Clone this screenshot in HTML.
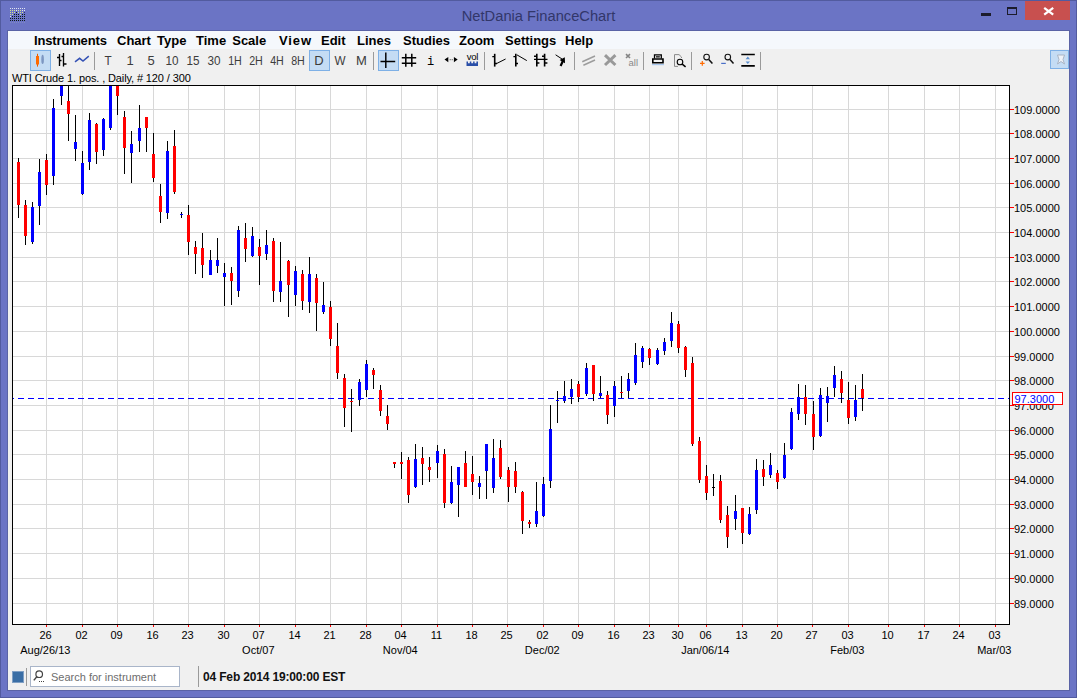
<!DOCTYPE html>
<html><head><meta charset="utf-8"><title>NetDania FinanceChart</title>
<style>
html,body{margin:0;padding:0}
body{width:1077px;height:698px;overflow:hidden;background:#6b74c5;position:relative;box-shadow:inset 0 0 0 1px #525b9f;font-family:"Liberation Sans",Arial,sans-serif}
.abs{position:absolute}
#title{left:0;top:0;width:1077px;height:31px;text-align:center;font-size:14.7px;line-height:32px;color:#32376a}
#content{left:8px;top:31px;width:1061px;height:659px;background:#f0f0f0;outline:1px solid #5a63a6}
#menubar{left:8px;top:31px;width:1061px;height:18px;background:#f5f8fc}
.menu{position:absolute;top:33px;font-weight:bold;font-size:13px;line-height:15px;color:#000;white-space:nowrap}
.tb{position:absolute;top:53px;font-size:13px;line-height:15px;color:#3c3c3c;white-space:nowrap;transform:translateX(-50%)}
.sel{position:absolute;box-sizing:border-box;background:#c4dcf4;border:1px solid #7eb0e6}
.sep{position:absolute;width:1px;background:#9a9a9a}
</style></head><body>
<div id="title" class="abs">NetDania FinanceChart</div>
<div id="content" class="abs"></div>
<div id="menubar" class="abs"></div>
<svg width="1077" height="698" viewBox="0 0 1077 698" style="position:absolute;left:0;top:0" shape-rendering="crispEdges">
<rect x="12" y="85" width="998" height="540" fill="#fff"/>
<rect x="46" y="86" width="1" height="538" fill="#d8d8d8"/>
<rect x="82" y="86" width="1" height="538" fill="#d8d8d8"/>
<rect x="117" y="86" width="1" height="538" fill="#d8d8d8"/>
<rect x="153" y="86" width="1" height="538" fill="#d8d8d8"/>
<rect x="188" y="86" width="1" height="538" fill="#d8d8d8"/>
<rect x="224" y="86" width="1" height="538" fill="#d8d8d8"/>
<rect x="259" y="86" width="1" height="538" fill="#d8d8d8"/>
<rect x="295" y="86" width="1" height="538" fill="#d8d8d8"/>
<rect x="330" y="86" width="1" height="538" fill="#d8d8d8"/>
<rect x="366" y="86" width="1" height="538" fill="#d8d8d8"/>
<rect x="401" y="86" width="1" height="538" fill="#d8d8d8"/>
<rect x="437" y="86" width="1" height="538" fill="#d8d8d8"/>
<rect x="472" y="86" width="1" height="538" fill="#d8d8d8"/>
<rect x="507" y="86" width="1" height="538" fill="#d8d8d8"/>
<rect x="543" y="86" width="1" height="538" fill="#d8d8d8"/>
<rect x="578" y="86" width="1" height="538" fill="#d8d8d8"/>
<rect x="614" y="86" width="1" height="538" fill="#d8d8d8"/>
<rect x="649" y="86" width="1" height="538" fill="#d8d8d8"/>
<rect x="678" y="86" width="1" height="538" fill="#d8d8d8"/>
<rect x="706" y="86" width="1" height="538" fill="#d8d8d8"/>
<rect x="742" y="86" width="1" height="538" fill="#d8d8d8"/>
<rect x="777" y="86" width="1" height="538" fill="#d8d8d8"/>
<rect x="812" y="86" width="1" height="538" fill="#d8d8d8"/>
<rect x="848" y="86" width="1" height="538" fill="#d8d8d8"/>
<rect x="888" y="86" width="1" height="538" fill="#d8d8d8"/>
<rect x="924" y="86" width="1" height="538" fill="#d8d8d8"/>
<rect x="959" y="86" width="1" height="538" fill="#d8d8d8"/>
<rect x="995" y="86" width="1" height="538" fill="#d8d8d8"/>
<rect x="13" y="109" width="996" height="1" fill="#d8d8d8"/>
<rect x="13" y="133" width="996" height="1" fill="#d8d8d8"/>
<rect x="13" y="158" width="996" height="1" fill="#d8d8d8"/>
<rect x="13" y="183" width="996" height="1" fill="#d8d8d8"/>
<rect x="13" y="207" width="996" height="1" fill="#d8d8d8"/>
<rect x="13" y="232" width="996" height="1" fill="#d8d8d8"/>
<rect x="13" y="257" width="996" height="1" fill="#d8d8d8"/>
<rect x="13" y="281" width="996" height="1" fill="#d8d8d8"/>
<rect x="13" y="306" width="996" height="1" fill="#d8d8d8"/>
<rect x="13" y="331" width="996" height="1" fill="#d8d8d8"/>
<rect x="13" y="356" width="996" height="1" fill="#d8d8d8"/>
<rect x="13" y="380" width="996" height="1" fill="#d8d8d8"/>
<rect x="13" y="405" width="996" height="1" fill="#d8d8d8"/>
<rect x="13" y="430" width="996" height="1" fill="#d8d8d8"/>
<rect x="13" y="454" width="996" height="1" fill="#d8d8d8"/>
<rect x="13" y="479" width="996" height="1" fill="#d8d8d8"/>
<rect x="13" y="504" width="996" height="1" fill="#d8d8d8"/>
<rect x="13" y="528" width="996" height="1" fill="#d8d8d8"/>
<rect x="13" y="553" width="996" height="1" fill="#d8d8d8"/>
<rect x="13" y="578" width="996" height="1" fill="#d8d8d8"/>
<rect x="13" y="603" width="996" height="1" fill="#d8d8d8"/>
<clipPath id="cp"><rect x="13" y="86" width="996" height="538"/></clipPath>
<g clip-path="url(#cp)">
<rect x="8" y="394" width="6" height="1" fill="#ffffd8"/><rect x="8" y="398" width="6" height="1" fill="#0000ff"/><rect x="18" y="394" width="6" height="1" fill="#ffffd8"/><rect x="18" y="398" width="6" height="1" fill="#0000ff"/><rect x="28" y="394" width="6" height="1" fill="#ffffd8"/><rect x="28" y="398" width="6" height="1" fill="#0000ff"/><rect x="38" y="394" width="6" height="1" fill="#ffffd8"/><rect x="38" y="398" width="6" height="1" fill="#0000ff"/><rect x="48" y="394" width="6" height="1" fill="#ffffd8"/><rect x="48" y="398" width="6" height="1" fill="#0000ff"/><rect x="58" y="394" width="6" height="1" fill="#ffffd8"/><rect x="58" y="398" width="6" height="1" fill="#0000ff"/><rect x="68" y="394" width="6" height="1" fill="#ffffd8"/><rect x="68" y="398" width="6" height="1" fill="#0000ff"/><rect x="78" y="394" width="6" height="1" fill="#ffffd8"/><rect x="78" y="398" width="6" height="1" fill="#0000ff"/><rect x="88" y="394" width="6" height="1" fill="#ffffd8"/><rect x="88" y="398" width="6" height="1" fill="#0000ff"/><rect x="98" y="394" width="6" height="1" fill="#ffffd8"/><rect x="98" y="398" width="6" height="1" fill="#0000ff"/><rect x="108" y="394" width="6" height="1" fill="#ffffd8"/><rect x="108" y="398" width="6" height="1" fill="#0000ff"/><rect x="118" y="394" width="6" height="1" fill="#ffffd8"/><rect x="118" y="398" width="6" height="1" fill="#0000ff"/><rect x="128" y="394" width="6" height="1" fill="#ffffd8"/><rect x="128" y="398" width="6" height="1" fill="#0000ff"/><rect x="138" y="394" width="6" height="1" fill="#ffffd8"/><rect x="138" y="398" width="6" height="1" fill="#0000ff"/><rect x="148" y="394" width="6" height="1" fill="#ffffd8"/><rect x="148" y="398" width="6" height="1" fill="#0000ff"/><rect x="158" y="394" width="6" height="1" fill="#ffffd8"/><rect x="158" y="398" width="6" height="1" fill="#0000ff"/><rect x="168" y="394" width="6" height="1" fill="#ffffd8"/><rect x="168" y="398" width="6" height="1" fill="#0000ff"/><rect x="178" y="394" width="6" height="1" fill="#ffffd8"/><rect x="178" y="398" width="6" height="1" fill="#0000ff"/><rect x="188" y="394" width="6" height="1" fill="#ffffd8"/><rect x="188" y="398" width="6" height="1" fill="#0000ff"/><rect x="198" y="394" width="6" height="1" fill="#ffffd8"/><rect x="198" y="398" width="6" height="1" fill="#0000ff"/><rect x="208" y="394" width="6" height="1" fill="#ffffd8"/><rect x="208" y="398" width="6" height="1" fill="#0000ff"/><rect x="218" y="394" width="6" height="1" fill="#ffffd8"/><rect x="218" y="398" width="6" height="1" fill="#0000ff"/><rect x="228" y="394" width="6" height="1" fill="#ffffd8"/><rect x="228" y="398" width="6" height="1" fill="#0000ff"/><rect x="238" y="394" width="6" height="1" fill="#ffffd8"/><rect x="238" y="398" width="6" height="1" fill="#0000ff"/><rect x="248" y="394" width="6" height="1" fill="#ffffd8"/><rect x="248" y="398" width="6" height="1" fill="#0000ff"/><rect x="258" y="394" width="6" height="1" fill="#ffffd8"/><rect x="258" y="398" width="6" height="1" fill="#0000ff"/><rect x="268" y="394" width="6" height="1" fill="#ffffd8"/><rect x="268" y="398" width="6" height="1" fill="#0000ff"/><rect x="278" y="394" width="6" height="1" fill="#ffffd8"/><rect x="278" y="398" width="6" height="1" fill="#0000ff"/><rect x="288" y="394" width="6" height="1" fill="#ffffd8"/><rect x="288" y="398" width="6" height="1" fill="#0000ff"/><rect x="298" y="394" width="6" height="1" fill="#ffffd8"/><rect x="298" y="398" width="6" height="1" fill="#0000ff"/><rect x="308" y="394" width="6" height="1" fill="#ffffd8"/><rect x="308" y="398" width="6" height="1" fill="#0000ff"/><rect x="318" y="394" width="6" height="1" fill="#ffffd8"/><rect x="318" y="398" width="6" height="1" fill="#0000ff"/><rect x="328" y="394" width="6" height="1" fill="#ffffd8"/><rect x="328" y="398" width="6" height="1" fill="#0000ff"/><rect x="338" y="394" width="6" height="1" fill="#ffffd8"/><rect x="338" y="398" width="6" height="1" fill="#0000ff"/><rect x="348" y="394" width="6" height="1" fill="#ffffd8"/><rect x="348" y="398" width="6" height="1" fill="#0000ff"/><rect x="358" y="394" width="6" height="1" fill="#ffffd8"/><rect x="358" y="398" width="6" height="1" fill="#0000ff"/><rect x="368" y="394" width="6" height="1" fill="#ffffd8"/><rect x="368" y="398" width="6" height="1" fill="#0000ff"/><rect x="378" y="394" width="6" height="1" fill="#ffffd8"/><rect x="378" y="398" width="6" height="1" fill="#0000ff"/><rect x="388" y="394" width="6" height="1" fill="#ffffd8"/><rect x="388" y="398" width="6" height="1" fill="#0000ff"/><rect x="398" y="394" width="6" height="1" fill="#ffffd8"/><rect x="398" y="398" width="6" height="1" fill="#0000ff"/><rect x="408" y="394" width="6" height="1" fill="#ffffd8"/><rect x="408" y="398" width="6" height="1" fill="#0000ff"/><rect x="418" y="394" width="6" height="1" fill="#ffffd8"/><rect x="418" y="398" width="6" height="1" fill="#0000ff"/><rect x="428" y="394" width="6" height="1" fill="#ffffd8"/><rect x="428" y="398" width="6" height="1" fill="#0000ff"/><rect x="438" y="394" width="6" height="1" fill="#ffffd8"/><rect x="438" y="398" width="6" height="1" fill="#0000ff"/><rect x="448" y="394" width="6" height="1" fill="#ffffd8"/><rect x="448" y="398" width="6" height="1" fill="#0000ff"/><rect x="458" y="394" width="6" height="1" fill="#ffffd8"/><rect x="458" y="398" width="6" height="1" fill="#0000ff"/><rect x="468" y="394" width="6" height="1" fill="#ffffd8"/><rect x="468" y="398" width="6" height="1" fill="#0000ff"/><rect x="478" y="394" width="6" height="1" fill="#ffffd8"/><rect x="478" y="398" width="6" height="1" fill="#0000ff"/><rect x="488" y="394" width="6" height="1" fill="#ffffd8"/><rect x="488" y="398" width="6" height="1" fill="#0000ff"/><rect x="498" y="394" width="6" height="1" fill="#ffffd8"/><rect x="498" y="398" width="6" height="1" fill="#0000ff"/><rect x="508" y="394" width="6" height="1" fill="#ffffd8"/><rect x="508" y="398" width="6" height="1" fill="#0000ff"/><rect x="518" y="394" width="6" height="1" fill="#ffffd8"/><rect x="518" y="398" width="6" height="1" fill="#0000ff"/><rect x="528" y="394" width="6" height="1" fill="#ffffd8"/><rect x="528" y="398" width="6" height="1" fill="#0000ff"/><rect x="538" y="394" width="6" height="1" fill="#ffffd8"/><rect x="538" y="398" width="6" height="1" fill="#0000ff"/><rect x="548" y="394" width="6" height="1" fill="#ffffd8"/><rect x="548" y="398" width="6" height="1" fill="#0000ff"/><rect x="558" y="394" width="6" height="1" fill="#ffffd8"/><rect x="558" y="398" width="6" height="1" fill="#0000ff"/><rect x="568" y="394" width="6" height="1" fill="#ffffd8"/><rect x="568" y="398" width="6" height="1" fill="#0000ff"/><rect x="578" y="394" width="6" height="1" fill="#ffffd8"/><rect x="578" y="398" width="6" height="1" fill="#0000ff"/><rect x="588" y="394" width="6" height="1" fill="#ffffd8"/><rect x="588" y="398" width="6" height="1" fill="#0000ff"/><rect x="598" y="394" width="6" height="1" fill="#ffffd8"/><rect x="598" y="398" width="6" height="1" fill="#0000ff"/><rect x="608" y="394" width="6" height="1" fill="#ffffd8"/><rect x="608" y="398" width="6" height="1" fill="#0000ff"/><rect x="618" y="394" width="6" height="1" fill="#ffffd8"/><rect x="618" y="398" width="6" height="1" fill="#0000ff"/><rect x="628" y="394" width="6" height="1" fill="#ffffd8"/><rect x="628" y="398" width="6" height="1" fill="#0000ff"/><rect x="638" y="394" width="6" height="1" fill="#ffffd8"/><rect x="638" y="398" width="6" height="1" fill="#0000ff"/><rect x="648" y="394" width="6" height="1" fill="#ffffd8"/><rect x="648" y="398" width="6" height="1" fill="#0000ff"/><rect x="658" y="394" width="6" height="1" fill="#ffffd8"/><rect x="658" y="398" width="6" height="1" fill="#0000ff"/><rect x="668" y="394" width="6" height="1" fill="#ffffd8"/><rect x="668" y="398" width="6" height="1" fill="#0000ff"/><rect x="678" y="394" width="6" height="1" fill="#ffffd8"/><rect x="678" y="398" width="6" height="1" fill="#0000ff"/><rect x="688" y="394" width="6" height="1" fill="#ffffd8"/><rect x="688" y="398" width="6" height="1" fill="#0000ff"/><rect x="698" y="394" width="6" height="1" fill="#ffffd8"/><rect x="698" y="398" width="6" height="1" fill="#0000ff"/><rect x="708" y="394" width="6" height="1" fill="#ffffd8"/><rect x="708" y="398" width="6" height="1" fill="#0000ff"/><rect x="718" y="394" width="6" height="1" fill="#ffffd8"/><rect x="718" y="398" width="6" height="1" fill="#0000ff"/><rect x="728" y="394" width="6" height="1" fill="#ffffd8"/><rect x="728" y="398" width="6" height="1" fill="#0000ff"/><rect x="738" y="394" width="6" height="1" fill="#ffffd8"/><rect x="738" y="398" width="6" height="1" fill="#0000ff"/><rect x="748" y="394" width="6" height="1" fill="#ffffd8"/><rect x="748" y="398" width="6" height="1" fill="#0000ff"/><rect x="758" y="394" width="6" height="1" fill="#ffffd8"/><rect x="758" y="398" width="6" height="1" fill="#0000ff"/><rect x="768" y="394" width="6" height="1" fill="#ffffd8"/><rect x="768" y="398" width="6" height="1" fill="#0000ff"/><rect x="778" y="394" width="6" height="1" fill="#ffffd8"/><rect x="778" y="398" width="6" height="1" fill="#0000ff"/><rect x="788" y="394" width="6" height="1" fill="#ffffd8"/><rect x="788" y="398" width="6" height="1" fill="#0000ff"/><rect x="798" y="394" width="6" height="1" fill="#ffffd8"/><rect x="798" y="398" width="6" height="1" fill="#0000ff"/><rect x="808" y="394" width="6" height="1" fill="#ffffd8"/><rect x="808" y="398" width="6" height="1" fill="#0000ff"/><rect x="818" y="394" width="6" height="1" fill="#ffffd8"/><rect x="818" y="398" width="6" height="1" fill="#0000ff"/><rect x="828" y="394" width="6" height="1" fill="#ffffd8"/><rect x="828" y="398" width="6" height="1" fill="#0000ff"/><rect x="838" y="394" width="6" height="1" fill="#ffffd8"/><rect x="838" y="398" width="6" height="1" fill="#0000ff"/><rect x="848" y="394" width="6" height="1" fill="#ffffd8"/><rect x="848" y="398" width="6" height="1" fill="#0000ff"/><rect x="858" y="394" width="6" height="1" fill="#ffffd8"/><rect x="858" y="398" width="6" height="1" fill="#0000ff"/><rect x="868" y="394" width="6" height="1" fill="#ffffd8"/><rect x="868" y="398" width="6" height="1" fill="#0000ff"/><rect x="878" y="394" width="6" height="1" fill="#ffffd8"/><rect x="878" y="398" width="6" height="1" fill="#0000ff"/><rect x="888" y="394" width="6" height="1" fill="#ffffd8"/><rect x="888" y="398" width="6" height="1" fill="#0000ff"/><rect x="898" y="394" width="6" height="1" fill="#ffffd8"/><rect x="898" y="398" width="6" height="1" fill="#0000ff"/><rect x="908" y="394" width="6" height="1" fill="#ffffd8"/><rect x="908" y="398" width="6" height="1" fill="#0000ff"/><rect x="918" y="394" width="6" height="1" fill="#ffffd8"/><rect x="918" y="398" width="6" height="1" fill="#0000ff"/><rect x="928" y="394" width="6" height="1" fill="#ffffd8"/><rect x="928" y="398" width="6" height="1" fill="#0000ff"/><rect x="938" y="394" width="6" height="1" fill="#ffffd8"/><rect x="938" y="398" width="6" height="1" fill="#0000ff"/><rect x="948" y="394" width="6" height="1" fill="#ffffd8"/><rect x="948" y="398" width="6" height="1" fill="#0000ff"/><rect x="958" y="394" width="6" height="1" fill="#ffffd8"/><rect x="958" y="398" width="6" height="1" fill="#0000ff"/><rect x="968" y="394" width="6" height="1" fill="#ffffd8"/><rect x="968" y="398" width="6" height="1" fill="#0000ff"/><rect x="978" y="394" width="6" height="1" fill="#ffffd8"/><rect x="978" y="398" width="6" height="1" fill="#0000ff"/><rect x="988" y="394" width="6" height="1" fill="#ffffd8"/><rect x="988" y="398" width="6" height="1" fill="#0000ff"/><rect x="998" y="394" width="6" height="1" fill="#ffffd8"/><rect x="998" y="398" width="6" height="1" fill="#0000ff"/><rect x="1008" y="394" width="6" height="1" fill="#ffffd8"/><rect x="1008" y="398" width="6" height="1" fill="#0000ff"/>
<rect x="18" y="158" width="1" height="60" fill="#000"/>
<rect x="17" y="162" width="3" height="43" fill="#ff0000"/>
<rect x="25" y="200" width="1" height="45" fill="#000"/>
<rect x="24" y="205" width="3" height="31" fill="#ff0000"/>
<rect x="32" y="202" width="1" height="42" fill="#000"/>
<rect x="31" y="207" width="3" height="35" fill="#0000ff"/>
<rect x="39" y="159" width="1" height="66" fill="#000"/>
<rect x="38" y="172" width="3" height="34" fill="#0000ff"/>
<rect x="46" y="154" width="1" height="41" fill="#000"/>
<rect x="45" y="160" width="3" height="25" fill="#ff0000"/>
<rect x="53" y="99" width="1" height="86" fill="#000"/>
<rect x="52" y="108" width="3" height="68" fill="#0000ff"/>
<rect x="61" y="80" width="1" height="25" fill="#000"/>
<rect x="60" y="80" width="3" height="16" fill="#0000ff"/>
<rect x="68" y="80" width="1" height="61" fill="#000"/>
<rect x="67" y="101" width="3" height="13" fill="#ff0000"/>
<rect x="75" y="115" width="1" height="46" fill="#000"/>
<rect x="74" y="142" width="3" height="7" fill="#0000ff"/>
<rect x="82" y="151" width="1" height="44" fill="#000"/>
<rect x="81" y="163" width="3" height="31" fill="#0000ff"/>
<rect x="89" y="113" width="1" height="57" fill="#000"/>
<rect x="88" y="120" width="3" height="42" fill="#0000ff"/>
<rect x="96" y="123" width="1" height="41" fill="#000"/>
<rect x="95" y="124" width="3" height="28" fill="#ff0000"/>
<rect x="103" y="118" width="1" height="38" fill="#000"/>
<rect x="102" y="119" width="3" height="31" fill="#0000ff"/>
<rect x="110" y="80" width="1" height="50" fill="#000"/>
<rect x="109" y="80" width="3" height="48" fill="#0000ff"/>
<rect x="117" y="80" width="1" height="35" fill="#000"/>
<rect x="116" y="80" width="3" height="16" fill="#ff0000"/>
<rect x="124" y="111" width="1" height="63" fill="#000"/>
<rect x="123" y="117" width="3" height="31" fill="#ff0000"/>
<rect x="131" y="131" width="1" height="52" fill="#000"/>
<rect x="130" y="144" width="3" height="9" fill="#0000ff"/>
<rect x="139" y="105" width="1" height="47" fill="#000"/>
<rect x="138" y="128" width="3" height="13" fill="#0000ff"/>
<rect x="146" y="117" width="1" height="35" fill="#000"/>
<rect x="145" y="117" width="3" height="11" fill="#ff0000"/>
<rect x="153" y="133" width="1" height="49" fill="#000"/>
<rect x="152" y="154" width="3" height="24" fill="#ff0000"/>
<rect x="160" y="184" width="1" height="39" fill="#000"/>
<rect x="159" y="196" width="3" height="16" fill="#ff0000"/>
<rect x="167" y="141" width="1" height="78" fill="#000"/>
<rect x="166" y="151" width="3" height="62" fill="#0000ff"/>
<rect x="174" y="130" width="1" height="64" fill="#000"/>
<rect x="173" y="146" width="3" height="46" fill="#ff0000"/>
<rect x="181" y="212" width="1" height="6" fill="#000"/>
<rect x="180" y="214" width="3" height="1" fill="#0000ff"/>
<rect x="188" y="205" width="1" height="50" fill="#000"/>
<rect x="187" y="215" width="3" height="27" fill="#ff0000"/>
<rect x="195" y="241" width="1" height="33" fill="#000"/>
<rect x="194" y="247" width="3" height="7" fill="#ff0000"/>
<rect x="202" y="233" width="1" height="45" fill="#000"/>
<rect x="201" y="248" width="3" height="17" fill="#ff0000"/>
<rect x="210" y="250" width="1" height="25" fill="#000"/>
<rect x="209" y="260" width="3" height="15" fill="#0000ff"/>
<rect x="217" y="238" width="1" height="35" fill="#000"/>
<rect x="216" y="260" width="3" height="6" fill="#0000ff"/>
<rect x="224" y="263" width="1" height="43" fill="#000"/>
<rect x="223" y="273" width="3" height="4" fill="#0000ff"/>
<rect x="231" y="267" width="1" height="38" fill="#000"/>
<rect x="230" y="273" width="3" height="8" fill="#ff0000"/>
<rect x="238" y="226" width="1" height="71" fill="#000"/>
<rect x="237" y="230" width="3" height="61" fill="#0000ff"/>
<rect x="245" y="223" width="1" height="39" fill="#000"/>
<rect x="244" y="238" width="3" height="11" fill="#ff0000"/>
<rect x="252" y="227" width="1" height="30" fill="#000"/>
<rect x="251" y="236" width="3" height="20" fill="#0000ff"/>
<rect x="259" y="239" width="1" height="46" fill="#000"/>
<rect x="258" y="247" width="3" height="9" fill="#ff0000"/>
<rect x="266" y="230" width="1" height="30" fill="#000"/>
<rect x="265" y="245" width="3" height="9" fill="#0000ff"/>
<rect x="273" y="238" width="1" height="64" fill="#000"/>
<rect x="272" y="241" width="3" height="50" fill="#ff0000"/>
<rect x="280" y="242" width="1" height="60" fill="#000"/>
<rect x="279" y="281" width="3" height="11" fill="#0000ff"/>
<rect x="288" y="260" width="1" height="57" fill="#000"/>
<rect x="287" y="261" width="3" height="24" fill="#ff0000"/>
<rect x="295" y="266" width="1" height="40" fill="#000"/>
<rect x="294" y="271" width="3" height="24" fill="#0000ff"/>
<rect x="302" y="270" width="1" height="40" fill="#000"/>
<rect x="301" y="274" width="3" height="27" fill="#ff0000"/>
<rect x="309" y="257" width="1" height="56" fill="#000"/>
<rect x="308" y="274" width="3" height="28" fill="#0000ff"/>
<rect x="316" y="274" width="1" height="57" fill="#000"/>
<rect x="315" y="278" width="3" height="25" fill="#ff0000"/>
<rect x="323" y="282" width="1" height="32" fill="#000"/>
<rect x="322" y="305" width="3" height="7" fill="#0000ff"/>
<rect x="330" y="301" width="1" height="45" fill="#000"/>
<rect x="329" y="307" width="3" height="32" fill="#ff0000"/>
<rect x="337" y="323" width="1" height="56" fill="#000"/>
<rect x="336" y="346" width="3" height="27" fill="#ff0000"/>
<rect x="344" y="374" width="1" height="53" fill="#000"/>
<rect x="343" y="378" width="3" height="30" fill="#ff0000"/>
<rect x="351" y="389" width="1" height="43" fill="#000"/>
<rect x="350" y="401" width="3" height="1" fill="#ff0000"/>
<rect x="359" y="379" width="1" height="27" fill="#000"/>
<rect x="358" y="382" width="3" height="18" fill="#0000ff"/>
<rect x="366" y="360" width="1" height="37" fill="#000"/>
<rect x="365" y="364" width="3" height="26" fill="#0000ff"/>
<rect x="373" y="368" width="1" height="21" fill="#000"/>
<rect x="372" y="370" width="3" height="5" fill="#ff0000"/>
<rect x="380" y="385" width="1" height="31" fill="#000"/>
<rect x="379" y="390" width="3" height="21" fill="#ff0000"/>
<rect x="387" y="405" width="1" height="25" fill="#000"/>
<rect x="386" y="416" width="3" height="8" fill="#ff0000"/>
<rect x="394" y="462" width="1" height="6" fill="#000"/>
<rect x="393" y="462" width="3" height="2" fill="#ff0000"/>
<rect x="401" y="452" width="1" height="27" fill="#000"/>
<rect x="400" y="462" width="3" height="2" fill="#ff0000"/>
<rect x="408" y="457" width="1" height="46" fill="#000"/>
<rect x="407" y="460" width="3" height="35" fill="#ff0000"/>
<rect x="415" y="444" width="1" height="44" fill="#000"/>
<rect x="414" y="459" width="3" height="28" fill="#0000ff"/>
<rect x="422" y="447" width="1" height="38" fill="#000"/>
<rect x="421" y="458" width="3" height="6" fill="#ff0000"/>
<rect x="429" y="457" width="1" height="25" fill="#000"/>
<rect x="428" y="467" width="3" height="3" fill="#ff0000"/>
<rect x="437" y="445" width="1" height="33" fill="#000"/>
<rect x="436" y="451" width="3" height="12" fill="#0000ff"/>
<rect x="444" y="449" width="1" height="59" fill="#000"/>
<rect x="443" y="454" width="3" height="49" fill="#ff0000"/>
<rect x="451" y="466" width="1" height="38" fill="#000"/>
<rect x="450" y="482" width="3" height="21" fill="#0000ff"/>
<rect x="458" y="467" width="1" height="50" fill="#000"/>
<rect x="457" y="467" width="3" height="18" fill="#0000ff"/>
<rect x="465" y="451" width="1" height="36" fill="#000"/>
<rect x="464" y="463" width="3" height="24" fill="#ff0000"/>
<rect x="472" y="456" width="1" height="39" fill="#000"/>
<rect x="471" y="474" width="3" height="8" fill="#ff0000"/>
<rect x="479" y="476" width="1" height="23" fill="#000"/>
<rect x="478" y="483" width="3" height="4" fill="#0000ff"/>
<rect x="486" y="444" width="1" height="55" fill="#000"/>
<rect x="485" y="444" width="3" height="27" fill="#0000ff"/>
<rect x="493" y="439" width="1" height="54" fill="#000"/>
<rect x="492" y="458" width="3" height="30" fill="#0000ff"/>
<rect x="500" y="440" width="1" height="39" fill="#000"/>
<rect x="499" y="448" width="3" height="29" fill="#ff0000"/>
<rect x="508" y="467" width="1" height="35" fill="#000"/>
<rect x="507" y="470" width="3" height="17" fill="#ff0000"/>
<rect x="515" y="462" width="1" height="31" fill="#000"/>
<rect x="514" y="471" width="3" height="16" fill="#ff0000"/>
<rect x="522" y="491" width="1" height="43" fill="#000"/>
<rect x="521" y="492" width="3" height="29" fill="#ff0000"/>
<rect x="529" y="520" width="1" height="8" fill="#000"/>
<rect x="528" y="522" width="3" height="2" fill="#ff0000"/>
<rect x="536" y="482" width="1" height="45" fill="#000"/>
<rect x="535" y="511" width="3" height="13" fill="#0000ff"/>
<rect x="543" y="477" width="1" height="40" fill="#000"/>
<rect x="542" y="484" width="3" height="32" fill="#0000ff"/>
<rect x="550" y="405" width="1" height="83" fill="#000"/>
<rect x="549" y="429" width="3" height="52" fill="#0000ff"/>
<rect x="557" y="391" width="1" height="32" fill="#000"/>
<rect x="556" y="400" width="3" height="1" fill="#0000ff"/>
<rect x="564" y="381" width="1" height="22" fill="#000"/>
<rect x="563" y="396" width="3" height="5" fill="#0000ff"/>
<rect x="571" y="379" width="1" height="25" fill="#000"/>
<rect x="570" y="389" width="3" height="8" fill="#0000ff"/>
<rect x="578" y="381" width="1" height="21" fill="#000"/>
<rect x="577" y="384" width="3" height="13" fill="#ff0000"/>
<rect x="586" y="363" width="1" height="33" fill="#000"/>
<rect x="585" y="368" width="3" height="26" fill="#0000ff"/>
<rect x="593" y="365" width="1" height="36" fill="#000"/>
<rect x="592" y="365" width="3" height="29" fill="#ff0000"/>
<rect x="600" y="376" width="1" height="22" fill="#000"/>
<rect x="599" y="393" width="3" height="3" fill="#0000ff"/>
<rect x="607" y="391" width="1" height="33" fill="#000"/>
<rect x="606" y="395" width="3" height="20" fill="#ff0000"/>
<rect x="614" y="381" width="1" height="36" fill="#000"/>
<rect x="613" y="386" width="3" height="20" fill="#0000ff"/>
<rect x="621" y="376" width="1" height="22" fill="#000"/>
<rect x="620" y="392" width="3" height="1" fill="#ff0000"/>
<rect x="628" y="373" width="1" height="25" fill="#000"/>
<rect x="627" y="379" width="3" height="12" fill="#0000ff"/>
<rect x="635" y="343" width="1" height="42" fill="#000"/>
<rect x="634" y="355" width="3" height="28" fill="#0000ff"/>
<rect x="642" y="346" width="1" height="22" fill="#000"/>
<rect x="641" y="348" width="3" height="14" fill="#0000ff"/>
<rect x="649" y="348" width="1" height="17" fill="#000"/>
<rect x="648" y="349" width="3" height="9" fill="#ff0000"/>
<rect x="657" y="348" width="1" height="17" fill="#000"/>
<rect x="656" y="350" width="3" height="14" fill="#0000ff"/>
<rect x="664" y="338" width="1" height="17" fill="#000"/>
<rect x="663" y="342" width="3" height="9" fill="#0000ff"/>
<rect x="671" y="312" width="1" height="35" fill="#000"/>
<rect x="670" y="323" width="3" height="18" fill="#0000ff"/>
<rect x="678" y="321" width="1" height="32" fill="#000"/>
<rect x="677" y="324" width="3" height="24" fill="#ff0000"/>
<rect x="685" y="346" width="1" height="31" fill="#000"/>
<rect x="684" y="347" width="3" height="23" fill="#ff0000"/>
<rect x="692" y="357" width="1" height="89" fill="#000"/>
<rect x="691" y="363" width="3" height="81" fill="#ff0000"/>
<rect x="699" y="437" width="1" height="46" fill="#000"/>
<rect x="698" y="441" width="3" height="39" fill="#ff0000"/>
<rect x="706" y="465" width="1" height="35" fill="#000"/>
<rect x="705" y="476" width="3" height="17" fill="#ff0000"/>
<rect x="713" y="474" width="1" height="22" fill="#000"/>
<rect x="712" y="487" width="3" height="1" fill="#000000"/>
<rect x="720" y="475" width="1" height="48" fill="#000"/>
<rect x="719" y="481" width="3" height="39" fill="#ff0000"/>
<rect x="727" y="506" width="1" height="42" fill="#000"/>
<rect x="726" y="515" width="3" height="22" fill="#ff0000"/>
<rect x="735" y="495" width="1" height="35" fill="#000"/>
<rect x="734" y="511" width="3" height="8" fill="#0000ff"/>
<rect x="742" y="508" width="1" height="36" fill="#000"/>
<rect x="741" y="508" width="3" height="25" fill="#ff0000"/>
<rect x="749" y="507" width="1" height="28" fill="#000"/>
<rect x="748" y="514" width="3" height="20" fill="#0000ff"/>
<rect x="756" y="459" width="1" height="55" fill="#000"/>
<rect x="755" y="470" width="3" height="40" fill="#0000ff"/>
<rect x="763" y="460" width="1" height="26" fill="#000"/>
<rect x="762" y="469" width="3" height="8" fill="#ff0000"/>
<rect x="770" y="453" width="1" height="25" fill="#000"/>
<rect x="769" y="465" width="3" height="10" fill="#0000ff"/>
<rect x="777" y="470" width="1" height="19" fill="#000"/>
<rect x="776" y="473" width="3" height="9" fill="#ff0000"/>
<rect x="784" y="443" width="1" height="36" fill="#000"/>
<rect x="783" y="455" width="3" height="23" fill="#0000ff"/>
<rect x="791" y="408" width="1" height="42" fill="#000"/>
<rect x="790" y="412" width="3" height="37" fill="#0000ff"/>
<rect x="798" y="384" width="1" height="36" fill="#000"/>
<rect x="797" y="397" width="3" height="17" fill="#0000ff"/>
<rect x="805" y="385" width="1" height="40" fill="#000"/>
<rect x="804" y="397" width="3" height="17" fill="#ff0000"/>
<rect x="813" y="401" width="1" height="49" fill="#000"/>
<rect x="812" y="414" width="3" height="23" fill="#ff0000"/>
<rect x="820" y="388" width="1" height="49" fill="#000"/>
<rect x="819" y="395" width="3" height="41" fill="#0000ff"/>
<rect x="827" y="387" width="1" height="35" fill="#000"/>
<rect x="826" y="396" width="3" height="7" fill="#0000ff"/>
<rect x="834" y="366" width="1" height="31" fill="#000"/>
<rect x="833" y="375" width="3" height="13" fill="#0000ff"/>
<rect x="841" y="371" width="1" height="32" fill="#000"/>
<rect x="840" y="379" width="3" height="14" fill="#ff0000"/>
<rect x="848" y="382" width="1" height="42" fill="#000"/>
<rect x="847" y="400" width="3" height="18" fill="#ff0000"/>
<rect x="855" y="385" width="1" height="36" fill="#000"/>
<rect x="854" y="400" width="3" height="17" fill="#0000ff"/>
<rect x="862" y="374" width="1" height="37" fill="#000"/>
<rect x="861" y="389" width="3" height="9" fill="#ff0000"/>
</g>
<rect x="12" y="85" width="998" height="1" fill="#000"/>
<rect x="12" y="624" width="998" height="1" fill="#000"/>
<rect x="12" y="85" width="1" height="540" fill="#000"/>
<rect x="1009" y="85" width="1" height="540" fill="#000"/>
<rect x="1010" y="109" width="4" height="1" fill="#ff0000"/>
<rect x="1010" y="133" width="4" height="1" fill="#ff0000"/>
<rect x="1010" y="158" width="4" height="1" fill="#ff0000"/>
<rect x="1010" y="183" width="4" height="1" fill="#ff0000"/>
<rect x="1010" y="207" width="4" height="1" fill="#ff0000"/>
<rect x="1010" y="232" width="4" height="1" fill="#ff0000"/>
<rect x="1010" y="257" width="4" height="1" fill="#ff0000"/>
<rect x="1010" y="281" width="4" height="1" fill="#ff0000"/>
<rect x="1010" y="306" width="4" height="1" fill="#ff0000"/>
<rect x="1010" y="331" width="4" height="1" fill="#ff0000"/>
<rect x="1010" y="356" width="4" height="1" fill="#ff0000"/>
<rect x="1010" y="380" width="4" height="1" fill="#ff0000"/>
<rect x="1010" y="405" width="4" height="1" fill="#ff0000"/>
<rect x="1010" y="430" width="4" height="1" fill="#ff0000"/>
<rect x="1010" y="454" width="4" height="1" fill="#ff0000"/>
<rect x="1010" y="479" width="4" height="1" fill="#ff0000"/>
<rect x="1010" y="504" width="4" height="1" fill="#ff0000"/>
<rect x="1010" y="528" width="4" height="1" fill="#ff0000"/>
<rect x="1010" y="553" width="4" height="1" fill="#ff0000"/>
<rect x="1010" y="578" width="4" height="1" fill="#ff0000"/>
<rect x="1010" y="603" width="4" height="1" fill="#ff0000"/>
<rect x="46" y="625" width="1" height="2" fill="#ff0000"/>
<rect x="82" y="625" width="1" height="2" fill="#ff0000"/>
<rect x="117" y="625" width="1" height="2" fill="#ff0000"/>
<rect x="153" y="625" width="1" height="2" fill="#ff0000"/>
<rect x="188" y="625" width="1" height="2" fill="#ff0000"/>
<rect x="224" y="625" width="1" height="2" fill="#ff0000"/>
<rect x="259" y="625" width="1" height="2" fill="#ff0000"/>
<rect x="295" y="625" width="1" height="2" fill="#ff0000"/>
<rect x="330" y="625" width="1" height="2" fill="#ff0000"/>
<rect x="366" y="625" width="1" height="2" fill="#ff0000"/>
<rect x="401" y="625" width="1" height="2" fill="#ff0000"/>
<rect x="437" y="625" width="1" height="2" fill="#ff0000"/>
<rect x="472" y="625" width="1" height="2" fill="#ff0000"/>
<rect x="507" y="625" width="1" height="2" fill="#ff0000"/>
<rect x="543" y="625" width="1" height="2" fill="#ff0000"/>
<rect x="578" y="625" width="1" height="2" fill="#ff0000"/>
<rect x="614" y="625" width="1" height="2" fill="#ff0000"/>
<rect x="649" y="625" width="1" height="2" fill="#ff0000"/>
<rect x="678" y="625" width="1" height="2" fill="#ff0000"/>
<rect x="706" y="625" width="1" height="2" fill="#ff0000"/>
<rect x="742" y="625" width="1" height="2" fill="#ff0000"/>
<rect x="777" y="625" width="1" height="2" fill="#ff0000"/>
<rect x="812" y="625" width="1" height="2" fill="#ff0000"/>
<rect x="848" y="625" width="1" height="2" fill="#ff0000"/>
<rect x="888" y="625" width="1" height="2" fill="#ff0000"/>
<rect x="924" y="625" width="1" height="2" fill="#ff0000"/>
<rect x="959" y="625" width="1" height="2" fill="#ff0000"/>
<rect x="995" y="625" width="1" height="2" fill="#ff0000"/>
</svg>
<svg width="1077" height="698" viewBox="0 0 1077 698" style="position:absolute;left:0;top:0" font-family="'Liberation Sans', Arial, sans-serif" font-size="11" fill="#000">
<text x="1014" y="114">109.0000</text>
<text x="1014" y="138">108.0000</text>
<text x="1014" y="163">107.0000</text>
<text x="1014" y="188">106.0000</text>
<text x="1014" y="212">105.0000</text>
<text x="1014" y="237">104.0000</text>
<text x="1014" y="262">103.0000</text>
<text x="1014" y="286">102.0000</text>
<text x="1014" y="311">101.0000</text>
<text x="1014" y="336">100.0000</text>
<text x="1014" y="361">99.0000</text>
<text x="1014" y="385">98.0000</text>
<text x="1014" y="410">97.0000</text>
<text x="1014" y="435">96.0000</text>
<text x="1014" y="459">95.0000</text>
<text x="1014" y="484">94.0000</text>
<text x="1014" y="509">93.0000</text>
<text x="1014" y="533">92.0000</text>
<text x="1014" y="558">91.0000</text>
<text x="1014" y="583">90.0000</text>
<text x="1014" y="608">89.0000</text>
<text x="45.5" y="639" text-anchor="middle">26</text>
<text x="81.5" y="639" text-anchor="middle">02</text>
<text x="116.5" y="639" text-anchor="middle">09</text>
<text x="152.5" y="639" text-anchor="middle">16</text>
<text x="187.5" y="639" text-anchor="middle">23</text>
<text x="223.5" y="639" text-anchor="middle">30</text>
<text x="258.5" y="639" text-anchor="middle">07</text>
<text x="294.5" y="639" text-anchor="middle">14</text>
<text x="329.5" y="639" text-anchor="middle">21</text>
<text x="365.5" y="639" text-anchor="middle">28</text>
<text x="400.5" y="639" text-anchor="middle">04</text>
<text x="436.5" y="639" text-anchor="middle">11</text>
<text x="471.5" y="639" text-anchor="middle">18</text>
<text x="506.5" y="639" text-anchor="middle">25</text>
<text x="542.5" y="639" text-anchor="middle">02</text>
<text x="577.5" y="639" text-anchor="middle">09</text>
<text x="613.5" y="639" text-anchor="middle">16</text>
<text x="648.5" y="639" text-anchor="middle">23</text>
<text x="677.5" y="639" text-anchor="middle">30</text>
<text x="705.5" y="639" text-anchor="middle">06</text>
<text x="741.5" y="639" text-anchor="middle">13</text>
<text x="776.5" y="639" text-anchor="middle">20</text>
<text x="811.5" y="639" text-anchor="middle">27</text>
<text x="847.5" y="639" text-anchor="middle">03</text>
<text x="887.5" y="639" text-anchor="middle">10</text>
<text x="923.5" y="639" text-anchor="middle">17</text>
<text x="958.5" y="639" text-anchor="middle">24</text>
<text x="994.5" y="639" text-anchor="middle">03</text>
<text x="45.3" y="654" text-anchor="middle">Aug/26/13</text>
<text x="258.3" y="654" text-anchor="middle">Oct/07</text>
<text x="400.3" y="654" text-anchor="middle">Nov/04</text>
<text x="542.3" y="654" text-anchor="middle">Dec/02</text>
<text x="705.3" y="654" text-anchor="middle">Jan/06/14</text>
<text x="847.3" y="654" text-anchor="middle">Feb/03</text>
<text x="994.3" y="654" text-anchor="middle">Mar/03</text>
<rect x="1012.5" y="392.5" width="50" height="12" fill="#fff" stroke="#ff0000" stroke-width="1"/>
<text x="1014.5" y="403" fill="#0000ff">97.3000</text>
</svg>
<div class="abs" style="left:981px;top:13px;width:10px;height:3px;background:#1c1c2c"></div>
<div class="abs" style="left:1007px;top:7px;width:10px;height:8px;box-sizing:border-box;border:1px solid #1c1c2c;border-top-width:2px"></div>
<div class="abs" style="left:1025px;top:1px;width:45px;height:19px;background:#c8504f"></div>
<svg class="abs" style="left:1025px;top:1px" width="45" height="19" viewBox="0 0 45 19"><path d="M19.2 6.9 L28.2 13.7 M28.2 6.9 L19.2 13.7" stroke="#fff" stroke-width="2.3" fill="none"/></svg>
<svg class="abs" style="left:0;top:0" width="40" height="30" viewBox="0 0 40 30" shape-rendering="crispEdges"><rect x="10" y="8" width="1" height="1" fill="#e4e6f2"/><rect x="12" y="8" width="1" height="1" fill="#e4e6f2"/><rect x="14" y="8" width="1" height="1" fill="#e4e6f2"/><rect x="16" y="8" width="1" height="1" fill="#e4e6f2"/><rect x="18" y="8" width="1" height="1" fill="#e4e6f2"/><rect x="20" y="8" width="1" height="1" fill="#e4e6f2"/><rect x="22" y="8" width="1" height="1" fill="#e4e6f2"/><rect x="24" y="8" width="1" height="1" fill="#e4e6f2"/><rect x="10" y="10" width="1" height="1" fill="#d2e28e"/><rect x="12" y="10" width="1" height="1" fill="#d2e28e"/><rect x="14" y="10" width="1" height="1" fill="#d2e28e"/><rect x="16" y="10" width="1" height="1" fill="#e4e6f2"/><rect x="18" y="10" width="1" height="1" fill="#d2e28e"/><rect x="20" y="10" width="1" height="1" fill="#d2e28e"/><rect x="22" y="10" width="1" height="1" fill="#e4e6f2"/><rect x="24" y="10" width="1" height="1" fill="#e4e6f2"/><rect x="10" y="12" width="1" height="1" fill="#d2e28e"/><rect x="12" y="12" width="1" height="1" fill="#d2e28e"/><rect x="14" y="12" width="1" height="1" fill="#d2e28e"/><rect x="16" y="12" width="1" height="1" fill="#0c1a18"/><rect x="18" y="12" width="1" height="1" fill="#d2e28e"/><rect x="20" y="12" width="1" height="1" fill="#d2e28e"/><rect x="22" y="12" width="1" height="1" fill="#d2e28e"/><rect x="24" y="12" width="1" height="1" fill="#34346a"/><rect x="10" y="14" width="1" height="1" fill="#d2e28e"/><rect x="12" y="14" width="1" height="1" fill="#d2e28e"/><rect x="14" y="14" width="1" height="1" fill="#0c1a18"/><rect x="16" y="14" width="1" height="1" fill="#0c1a18"/><rect x="18" y="14" width="1" height="1" fill="#0c1a18"/><rect x="20" y="14" width="1" height="1" fill="#d2e28e"/><rect x="22" y="14" width="1" height="1" fill="#0c1a18"/><rect x="24" y="14" width="1" height="1" fill="#0c1a18"/><rect x="10" y="16" width="1" height="1" fill="#e4e6f2"/><rect x="12" y="16" width="1" height="1" fill="#0c1a18"/><rect x="14" y="16" width="1" height="1" fill="#0c1a18"/><rect x="16" y="16" width="1" height="1" fill="#0c1a18"/><rect x="18" y="16" width="1" height="1" fill="#0c1a18"/><rect x="20" y="16" width="1" height="1" fill="#0c1a18"/><rect x="22" y="16" width="1" height="1" fill="#0c1a18"/><rect x="24" y="16" width="1" height="1" fill="#0c1a18"/><rect x="10" y="18" width="1" height="1" fill="#0c1a18"/><rect x="12" y="18" width="1" height="1" fill="#0c1a18"/><rect x="14" y="18" width="1" height="1" fill="#0c1a18"/><rect x="16" y="18" width="1" height="1" fill="#0c1a18"/><rect x="18" y="18" width="1" height="1" fill="#0c1a18"/><rect x="20" y="18" width="1" height="1" fill="#0c1a18"/><rect x="22" y="18" width="1" height="1" fill="#0c1a18"/><rect x="24" y="18" width="1" height="1" fill="#0c1a18"/><rect x="10" y="20" width="1" height="1" fill="#0c1a18"/><rect x="12" y="20" width="1" height="1" fill="#0c1a18"/><rect x="14" y="20" width="1" height="1" fill="#0c1a18"/><rect x="16" y="20" width="1" height="1" fill="#0c1a18"/><rect x="18" y="20" width="1" height="1" fill="#0c1a18"/><rect x="20" y="20" width="1" height="1" fill="#0c1a18"/><rect x="22" y="20" width="1" height="1" fill="#0c1a18"/><rect x="24" y="20" width="1" height="1" fill="#0c1a18"/><rect x="10" y="22" width="1" height="1" fill="#7f88c6"/><rect x="12" y="22" width="1" height="1" fill="#7f88c6"/><rect x="14" y="22" width="1" height="1" fill="#7f88c6"/><rect x="16" y="22" width="1" height="1" fill="#7f88c6"/><rect x="18" y="22" width="1" height="1" fill="#7f88c6"/><rect x="20" y="22" width="1" height="1" fill="#7f88c6"/><rect x="22" y="22" width="1" height="1" fill="#7f88c6"/><rect x="24" y="22" width="1" height="1" fill="#7f88c6"/></svg>
<div class="menu" style="left:34px;letter-spacing:-0.15px">Instruments</div>
<div class="menu" style="left:117px;word-spacing:2.5px">Chart Type</div>
<div class="menu" style="left:196px;word-spacing:2.5px">Time Scale</div>
<div class="menu" style="left:279px;letter-spacing:0.9px">View</div>
<div class="menu" style="left:321px;word-spacing:2.5px">Edit</div>
<div class="menu" style="left:357px;word-spacing:2.5px">Lines</div>
<div class="menu" style="left:403px;word-spacing:2.5px">Studies</div>
<div class="menu" style="left:459px;word-spacing:2.5px">Zoom</div>
<div class="menu" style="left:505px;word-spacing:2.5px">Settings</div>
<div class="menu" style="left:565px;word-spacing:2.5px">Help</div>
<div class="sel" style="left:30px;top:50px;width:21px;height:21px"></div>
<div class="sel" style="left:309px;top:50px;width:21px;height:21px"></div>
<div class="sel" style="left:378px;top:50px;width:21px;height:21px"></div>
<div class="sel" style="left:1050px;top:50px;width:19px;height:19px"></div>
<div class="sep" style="left:94px;top:52px;height:18px"></div>
<div class="sep" style="left:373px;top:52px;height:18px"></div>
<div class="sep" style="left:484px;top:52px;height:18px"></div>
<div class="sep" style="left:574px;top:52px;height:18px"></div>
<div class="sep" style="left:643px;top:52px;height:18px"></div>
<div class="sep" style="left:691px;top:52px;height:18px"></div>
<div class="sep" style="left:760px;top:52px;height:18px"></div>
<div class="tb" style="left:108.3px;transform:translateX(-50%) scaleX(0.90)">T</div>
<div class="tb" style="left:130.0px;transform:translateX(-50%) scaleX(1.00)">1</div>
<div class="tb" style="left:151.0px;transform:translateX(-50%) scaleX(1.00)">5</div>
<div class="tb" style="left:171.5px;transform:translateX(-50%) scaleX(0.90)">10</div>
<div class="tb" style="left:192.5px;transform:translateX(-50%) scaleX(0.90)">15</div>
<div class="tb" style="left:214.0px;transform:translateX(-50%) scaleX(0.90)">30</div>
<div class="tb" style="left:234.7px;transform:translateX(-50%) scaleX(0.82)">1H</div>
<div class="tb" style="left:256.0px;transform:translateX(-50%) scaleX(0.82)">2H</div>
<div class="tb" style="left:277.0px;transform:translateX(-50%) scaleX(0.82)">4H</div>
<div class="tb" style="left:298.0px;transform:translateX(-50%) scaleX(0.82)">8H</div>
<div class="tb" style="left:319.0px;transform:translateX(-50%) scaleX(1.00)">D</div>
<div class="tb" style="left:340.2px;transform:translateX(-50%) scaleX(0.90)">W</div>
<div class="tb" style="left:361.5px;transform:translateX(-50%) scaleX(1.00)">M</div>
<svg class="abs" style="left:0;top:46px" width="1077" height="30" viewBox="0 46 1077 30" fill="none">
<path d="M37.5 53.8V66.6" stroke="#e85a00" stroke-width="1"/><rect x="36" y="56" width="3" height="8.5" fill="#ff6a00"/>
<ellipse cx="42.6" cy="59.4" rx="1.3" ry="4.6" fill="#7d97c2"/>
<path d="M59.5 54V66 M63.5 53V66.5 M57 57.5H59.5 M59.5 60.5H61.5 M61.5 56.5H63.5 M63.5 64H66.5" stroke="#000" stroke-width="1.35"/>
<path d="M75 61.8L79.6 58.3L83 61L88.8 56.2" stroke="#3552b5" stroke-width="1.5"/>
<path d="M385.8 52.5V68 M380.5 61.4H395.2" stroke="#000" stroke-width="1.45"/>
<path d="M405.8 53.8V66.8 M411.8 53.8V66.8 M401.8 57.7H416.2 M401.8 63.3H416.2" stroke="#000" stroke-width="1.5"/>
<path d="M444.5 59.6L448.3 57V62.2Z M457.7 59.6L453.9 57V62.2Z" fill="#000"/><rect x="449.7" y="59.2" width="1" height="1" fill="#444"/><rect x="451.7" y="59.2" width="1" height="1" fill="#444"/>
<path d="M466.5 66V61.6H468V63.2H469.8V61.6H471.3V63.2H473.1V61.6H474.6V63.2H476.4V61.6H478V66Z" fill="#2a4fa8"/>
<path d="M494.7 53.8V66.6" stroke="#000" stroke-width="1.6"/><path d="M492.3 56.6H494.7 M494.7 63.5H497" stroke="#000" stroke-width="1.4"/><path d="M496.5 63.6L505.6 59" stroke="#000" stroke-width="1"/>
<path d="M515.8 53.8V66.6" stroke="#000" stroke-width="1.6"/><path d="M513.4 56.6H515.8 M515.8 63.5H518" stroke="#000" stroke-width="1.4"/><path d="M517 54.9L526.8 60.6" stroke="#000" stroke-width="1"/>
<path d="M536.8 53.8V66.6 M544.6 53.8V66.6" stroke="#000" stroke-width="1.6"/><path d="M534 56.3H536.8 M542 56.3H544.6 M534 59.4H547.5 M536.8 63H539.4 M544.6 63H547.4" stroke="#000" stroke-width="1.4"/>
<path d="M555.6 54.8L562 59" stroke="#000" stroke-width="1"/><path d="M560.6 66L563.2 60.2" stroke="#000" stroke-width="2.2"/><path d="M564.8 57.2L565 63.2L559.6 60Z" fill="#000"/>
<path d="M582.3 61.8L595 56 M583.4 65.2L595 60" stroke="#9c9c9c" stroke-width="1.5"/>
<path d="M605 55.2L615.4 65 M615.4 55.2L605 65" stroke="#999" stroke-width="3"/>
<path d="M626 54.2L630 58 M630 54.2L626 58" stroke="#858585" stroke-width="1.6"/>
<path d="M654.5 58.5V54.8H661.3V58.5 M656 56.8H659.8" stroke="#000" stroke-width="1.3"/><path d="M652.8 59H663V62.8H652.8Z" stroke="#000" stroke-width="1.6"/><rect x="652" y="64" width="12" height="1.2" fill="#a9c8ee"/>
<path d="M674.5 54.6H679L681.5 57V58 M674.5 54.6V66.4H678" stroke="#8a8a8a" stroke-width="1"/><circle cx="680" cy="62" r="2.8" stroke="#000" stroke-width="1.1"/><path d="M682.2 64.2L685.6 66.8" stroke="#000" stroke-width="1.5"/>
<circle cx="706.6" cy="57.1" r="2.8" stroke="#111" stroke-width="1.1"/><path d="M708.8 59.4L712.4 63.6" stroke="#111" stroke-width="1.5"/><path d="M700 63.4H704.6 M702.3 61V65.8" stroke="#ff6a00" stroke-width="1.2"/>
<circle cx="727.8" cy="57.1" r="2.8" stroke="#111" stroke-width="1.1"/><path d="M730 59.4L733.5 63.6" stroke="#111" stroke-width="1.5"/><path d="M721.2 63.4H725.8" stroke="#4a6fc8" stroke-width="1.2"/>
<path d="M741.3 54.5H754.8 M741.3 65.8H754.8" stroke="#000" stroke-width="1.7"/><path d="M747.8 56.6L750 59.2H745.6Z M747.8 64L750 61.4H745.6Z" fill="#5b8fd0"/>
<path d="M1057.5 55H1064.5L1063 59.5L1064.5 64L1061 61.5L1057.5 64L1059 59.5Z" fill="#eef2f8" stroke="#a8b4c4" stroke-width="1"/>
</svg>
<div class="abs" style="left:425px;top:54.5px;width:11px;text-align:center;font-family:'Liberation Mono',monospace;font-size:12px;line-height:14px;color:#000">i</div>
<div class="abs" style="left:465px;top:50.5px;width:15px;text-align:center;font-size:9.5px;line-height:12px;color:#000;letter-spacing:-.2px">vol</div>
<div class="abs" style="left:628.5px;top:57.5px;font-size:9.5px;line-height:10px;color:#888">all</div>
<div class="abs" style="left:12px;top:72px;font-size:11px;line-height:13px;color:#000;white-space:nowrap;letter-spacing:-0.12px" id="lbl">WTI Crude 1. pos. , Daily, # 120 / 300</div>
<div class="abs" style="left:12px;top:671px;width:12px;height:12px;background:#3a6ea5;border:1px solid #7f9fc4;box-sizing:border-box"></div>
<div class="sep" style="left:26px;top:668px;height:18px"></div>
<div class="abs" style="left:30px;top:666px;width:150px;height:21px;box-sizing:border-box;border:1px solid #a9b5c9;background:#fff"></div>
<svg class="abs" style="left:32px;top:668px" width="16" height="17" viewBox="0 0 16 17" fill="none"><circle cx="7.2" cy="6.2" r="3.3" stroke="#444" stroke-width="1.2"/><path d="M4.9 8.6L1.8 12.4" stroke="#444" stroke-width="1.5"/><rect x="7" y="13" width="1" height="1" fill="#444"/><rect x="9" y="13" width="1" height="1" fill="#444"/><rect x="11" y="13" width="1" height="1" fill="#444"/></svg>
<div class="abs" style="left:51px;top:670px;font-size:11px;line-height:15px;color:#6d6d6d;white-space:nowrap" id="srch">Search for instrument</div>
<div class="sep" style="left:198px;top:666px;height:21px"></div>
<div class="abs" style="left:203px;top:670px;font-size:12px;font-weight:bold;line-height:15px;color:#111;white-space:nowrap;letter-spacing:-0.16px" id="dt">04 Feb 2014 19:00:00 EST</div>
</body></html>
